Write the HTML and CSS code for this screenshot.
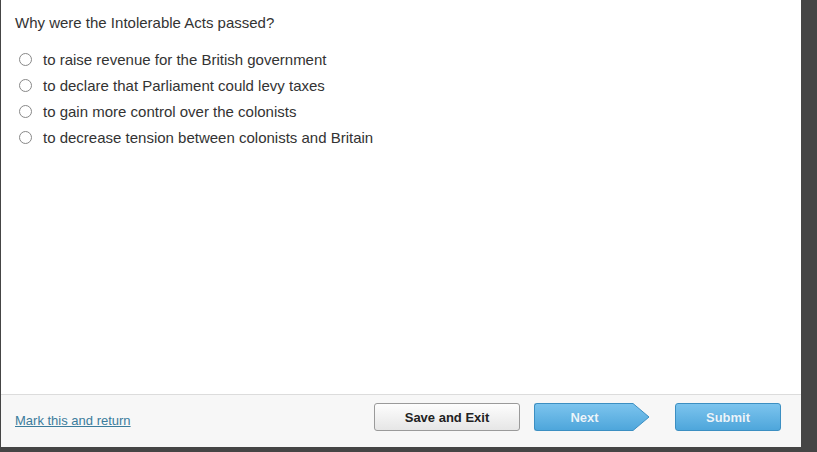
FILE: index.html
```html
<!DOCTYPE html>
<html>
<head>
<meta charset="utf-8">
<link rel="stylesheet" href="styles.css">
</head>
<body>
<div class="panel">
  <div class="content">
    <p class="question">Why were the Intolerable Acts passed?</p>
    <ul class="options">
      <li class="option"><span class="radio"></span><span>to raise revenue for the British government</span></li>
      <li class="option"><span class="radio"></span><span>to declare that Parliament could levy taxes</span></li>
      <li class="option"><span class="radio"></span><span>to gain more control over the colonists</span></li>
      <li class="option"><span class="radio"></span><span>to decrease tension between colonists and Britain</span></li>
    </ul>
  </div>
  <div class="footer">
    <a class="mark" href="#">Mark this and return</a>
    <div class="buttons">
      <button class="btn save">Save and Exit</button>
      <button class="btn next">Next<svg class="arrow" width="19" height="28" viewBox="0 0 19 28"><defs><linearGradient id="g" x1="0" y1="0" x2="0" y2="1"><stop offset="0" stop-color="#7cc4ee"/><stop offset="1" stop-color="#4ea6db"/></linearGradient></defs><path d="M0 0.5 H2 L18 14 L2 27.5 H0" fill="url(#g)" stroke="#3c8fc2" stroke-width="1"/></svg></button>
      <button class="btn submit">Submit</button>
    </div>
  </div>
</div>
</body>
</html>
```

FILE: styles.css
```css
html, body {
  margin: 0;
  padding: 0;
  background: #454545;
  height: 452px;
  overflow: hidden;
}
body {
  font-family: "Liberation Sans", Arial, sans-serif;
  color: #333;
}
.panel {
  width: 800px;
  height: 447px;
  margin-left: 1px;
  background: #fff;
  display: flex;
  flex-direction: column;
}
.content {
  flex: 1;
  padding: 14px 0 0 14px;
}
.question {
  margin: 0;
  font-size: 15px;
  line-height: 18px;
}
.options {
  list-style: none;
  margin: 14px 0 0 0;
  padding: 0;
}
.option {
  display: flex;
  align-items: center;
  height: 26px;
  font-size: 15px;
}
.radio {
  width: 11px;
  height: 11px;
  border: 1px solid #888;
  border-radius: 50%;
  margin: 0 11px 0 4px;
  background: #fff;
  box-sizing: content-box;
}
.footer {
  box-sizing: border-box;
  height: 53px;
  flex: none;
  border-top: 1px solid #dcdcdc;
  background: #f7f7f7;
  display: flex;
  align-items: flex-start;
  justify-content: space-between;
  padding: 8px 20px 0 14px;
}
.mark {
  color: #3b7c9c;
  font-size: 13px;
  text-decoration: underline;
  margin-top: 10px;
}
.buttons {
  display: flex;
  align-items: center;
}
.btn {
  font-family: "Liberation Sans", Arial, sans-serif;
  font-weight: bold;
  font-size: 13px;
  height: 28px;
  border-radius: 3px;
  padding: 0;
  cursor: pointer;
}
.save {
  width: 146px;
  background: linear-gradient(#fdfdfd, #e6e6e6);
  border: 1px solid #9a9a9a;
  color: #222;
}
.next {
  position: relative;
  width: 97px;
  margin-left: 14px;
  margin-right: 44px;
  background: linear-gradient(#7cc4ee, #4ea6db);
  border: 1px solid #3c8fc2;
  border-right: none;
  border-radius: 3px 0 0 3px;
  color: #eaf5fc;
  padding-left: 3px;
  text-shadow: 0 0 1px #5a9ccb;
}
.arrow {
  position: absolute;
  top: -1px;
  left: 96px;
}
.submit {
  width: 106px;
  background: linear-gradient(#7cc4ee, #4ea6db);
  border: 1px solid #3c8fc2;
  color: #eaf5fc;
  text-shadow: 0 0 1px #5a9ccb;
}
```
